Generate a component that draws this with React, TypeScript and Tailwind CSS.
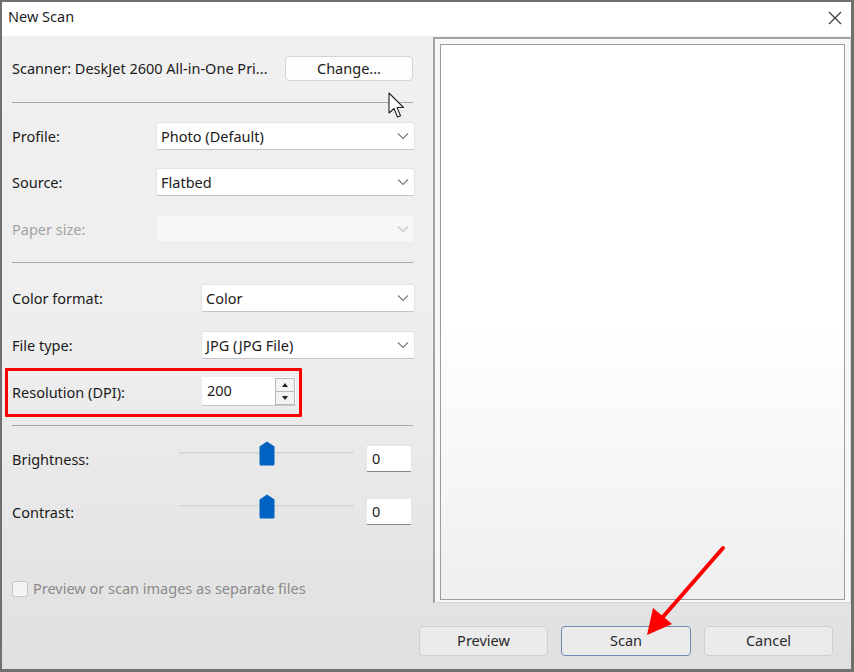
import React from "react";

const font = { fontFamily: '"Noto Sans", "Segoe UI", sans-serif' };

function Chevron() {
  return (
    <svg width="12" height="8" viewBox="0 0 12 8" className="shrink-0">
      <path d="M1 1.5 L6 6.5 L11 1.5" fill="none" stroke="#7a7a7a" strokeWidth="1.1" />
    </svg>
  );
}

function Select({ value, disabled }: { value: string; disabled?: boolean }) {
  return (
    <div
      className={
        "flex-1 h-[28px] flex items-center justify-between pl-[4px] pr-[5px] rounded-[3px] border " +
        (disabled
          ? "bg-[#f6f6f6] border-[#ececec]"
          : "bg-white border-[#e3e3e3] border-b-[#c4c4c4]")
      }
    >
      <span className="text-[14.5px] text-[#1b1b1b] leading-none pt-[1px]">{value}</span>
      <span className={disabled ? "opacity-40" : ""}>
        <Chevron />
      </span>
    </div>
  );
}

function Row({
  label,
  labelW,
  value,
  disabled,
  mt,
}: {
  label: string;
  labelW: string;
  value: string;
  disabled?: boolean;
  mt: string;
}) {
  return (
    <div className={"flex items-center " + mt}>
      <div className={labelW + " text-[14.5px] pt-[1px] " + (disabled ? "text-[#a3a3a3]" : "text-[#1b1b1b]")}>{label}</div>
      <Select value={value} disabled={disabled} />
    </div>
  );
}

function Thumb() {
  return (
    <svg width="16" height="25" viewBox="0 0 16 25">
      <path d="M8 0.5 L15.5 5.5 L15.5 23 Q15.5 24.5 14 24.5 L2 24.5 Q0.5 24.5 0.5 23 L0.5 5.5 Z" fill="#0063c1" />
    </svg>
  );
}

function SliderRow({ label, mt }: { label: string; mt: string }) {
  return (
    <div className={"flex items-center h-[27px] " + mt}>
      <div className="w-[167px] text-[14.5px] text-[#1b1b1b] pt-[2px]">{label}</div>
      <div className="relative w-[175px] h-[27px]">
        <div className="absolute left-0 right-0 top-[7px] h-[3px] bg-[#e4e4e4] border-t border-[#d0d0d0]" />
        <div className="absolute left-[80px] top-[-4px]">
          <Thumb />
        </div>
      </div>
      <div className="ml-[12px] w-[46px] h-[27px] bg-white border border-[#e6e6e6] border-b-[#8a8a8a] rounded-[2px] flex items-center pl-[5px] text-[14.5px] text-[#1b1b1b]">
        0
      </div>
    </div>
  );
}

function Sep({ mt }: { mt: string }) {
  return <div className={"h-px bg-[#a8a8a8] mr-[2px] " + mt} />;
}

function Btn({ label, focused }: { label: string; focused?: boolean }) {
  return (
    <div
      className={
        "h-[30px] flex items-center justify-center rounded-[4px] text-[14.5px] text-[#2a2a2a] bg-[#ebebeb] border " +
        (focused ? "w-[130px] border-[#6f8db3]" : "w-[129px] border-[#cfcfcf]")
      }
    >
      {label}
    </div>
  );
}

export default function App() {
  return (
    <div className="relative w-[854px] h-[672px] overflow-hidden bg-[#6f6f6f]" style={font}>
      <div className="flex flex-col h-full border-l-2 border-t-2 border-r-[3px] border-b-[3px] border-[#6f6f6f]">
        {/* Title bar */}
        <div className="h-[34px] bg-white flex items-center justify-between pl-[6px] pr-[9px] pb-[4px] shrink-0">
          <span className="text-[14.5px] text-[#1f1f1f]">New Scan</span>
          <svg width="14" height="14" viewBox="0 0 14 14" className="mt-[2px]">
            <path d="M1 1 L13 13 M13 1 L1 13" stroke="#3a3a3a" strokeWidth="1.2" />
          </svg>
        </div>
        {/* Body */}
        <div className="flex-1 flex flex-col bg-gradient-to-b from-[#f0f0f0] via-[#eeeeee] to-[#e0e0e0]">
          <div className="flex h-[568px] shrink-0">
            {/* Left panel */}
            <div className="w-[431px] shrink-0 flex flex-col pl-[10px] pr-[18px]">
              <div className="flex items-center justify-between h-[25px] mt-[20px]">
                <span className="text-[14.5px] text-[#1b1b1b]">Scanner: DeskJet 2600 All-in-One Pri...</span>
                <div className="w-[128px] h-[25px] mr-[2px] bg-[#fdfdfd] border border-[#d3d3d3] rounded-[4px] flex items-center justify-center text-[14.5px] text-[#1b1b1b]">
                  Change...
                </div>
              </div>
              <Sep mt="mt-[21px]" />
              <Row label="Profile:" labelW="w-[144px]" value="Photo (Default)" mt="mt-[19px]" />
              <Row label="Source:" labelW="w-[144px]" value="Flatbed" mt="mt-[18px]" />
              <Row label="Paper size:" labelW="w-[144px]" value="" disabled mt="mt-[19px]" />
              <Sep mt="mt-[19px]" />
              <Row label="Color format:" labelW="w-[189px]" value="Color" mt="mt-[21px]" />
              <Row label="File type:" labelW="w-[189px]" value="JPG (JPG File)" mt="mt-[19px]" />
              <div className="flex items-center mt-[18px] h-[29px]">
                <div className="w-[190px] text-[14.5px] text-[#1b1b1b] pt-[2px]">Resolution (DPI):</div>
                <div className="w-[94px] h-[29px] bg-white border-b border-[#c9c9c9] flex items-center justify-between pl-[5px] pr-[1px]">
                  <span className="text-[14.5px] text-[#1b1b1b]">200</span>
                  <div className="flex flex-col w-[20px] h-[27px]">
                    <div className="flex-1 bg-[#f3f3f3] border border-[#b9b9b9] flex items-center justify-center">
                      <svg width="6" height="4" viewBox="0 0 6 4"><path d="M0 4 L3 0 L6 4 Z" fill="#222" /></svg>
                    </div>
                    <div className="flex-1 bg-[#f3f3f3] border border-t-0 border-[#b9b9b9] flex items-center justify-center">
                      <svg width="6" height="4" viewBox="0 0 6 4"><path d="M0 0 L3 4 L6 0 Z" fill="#222" /></svg>
                    </div>
                  </div>
                </div>
              </div>
              <Sep mt="mt-[19px]" />
              <SliderRow label="Brightness:" mt="mt-[19px]" />
              <SliderRow label="Contrast:" mt="mt-[26px]" />
              <div className="flex items-center mt-[56px] h-[16px]">
                <div className="w-[16px] h-[16px] rounded-[3px] border border-[#c6c6c6] bg-[#f3f3f3]" />
                <span className="ml-[5px] text-[14.5px] text-[#8a8a8a]">Preview or scan images as separate files</span>
              </div>
            </div>
            {/* Preview frame */}
            <div className="flex-1 mt-[1px] mb-[1px] border-l-2 border-t-2 border-[#a4a4a4] border-r border-b border-r-[#d6d6d6] border-b-[#d6d6d6] bg-[#f7f7f7] pl-[5px] pt-[5px] pr-[5px] pb-[2px] flex">
              <div className="flex-1 border border-[#9c9c9c] bg-gradient-to-b from-white via-white to-[#efefef]" />
            </div>
          </div>
          {/* Buttons */}
          <div className="flex justify-end gap-[13px] pr-[18px] pt-[22px]">
            <Btn label="Preview" />
            <Btn label="Scan" focused />
            <Btn label="Cancel" />
          </div>
        </div>
      </div>

      {/* Red highlight box annotation */}
      <div className="absolute left-[5px] top-[368px] w-[297px] h-[49px] border-[3px] border-[#ff0000] rounded-[1px]" />

      {/* Mouse cursor */}
      <svg className="absolute left-[388px] top-[92px]" width="18" height="28" viewBox="0 0 18 28">
        <path d="M1 1 L1 21 L6 16.5 L9.5 25 L12.5 23.8 L9 15.5 L15.5 15.5 Z" fill="#fff" stroke="#222" strokeWidth="1.1" strokeLinejoin="round" />
      </svg>

      {/* Red arrow annotation */}
      <svg className="absolute left-0 top-0 pointer-events-none" width="854" height="672" viewBox="0 0 854 672">
        <line x1="723" y1="548" x2="662" y2="618" stroke="#ff0000" strokeWidth="4" strokeLinecap="round" />
        <path d="M647 635 L653 608 L672 624 Z" fill="#ff0000" />
      </svg>
    </div>
  );
}
